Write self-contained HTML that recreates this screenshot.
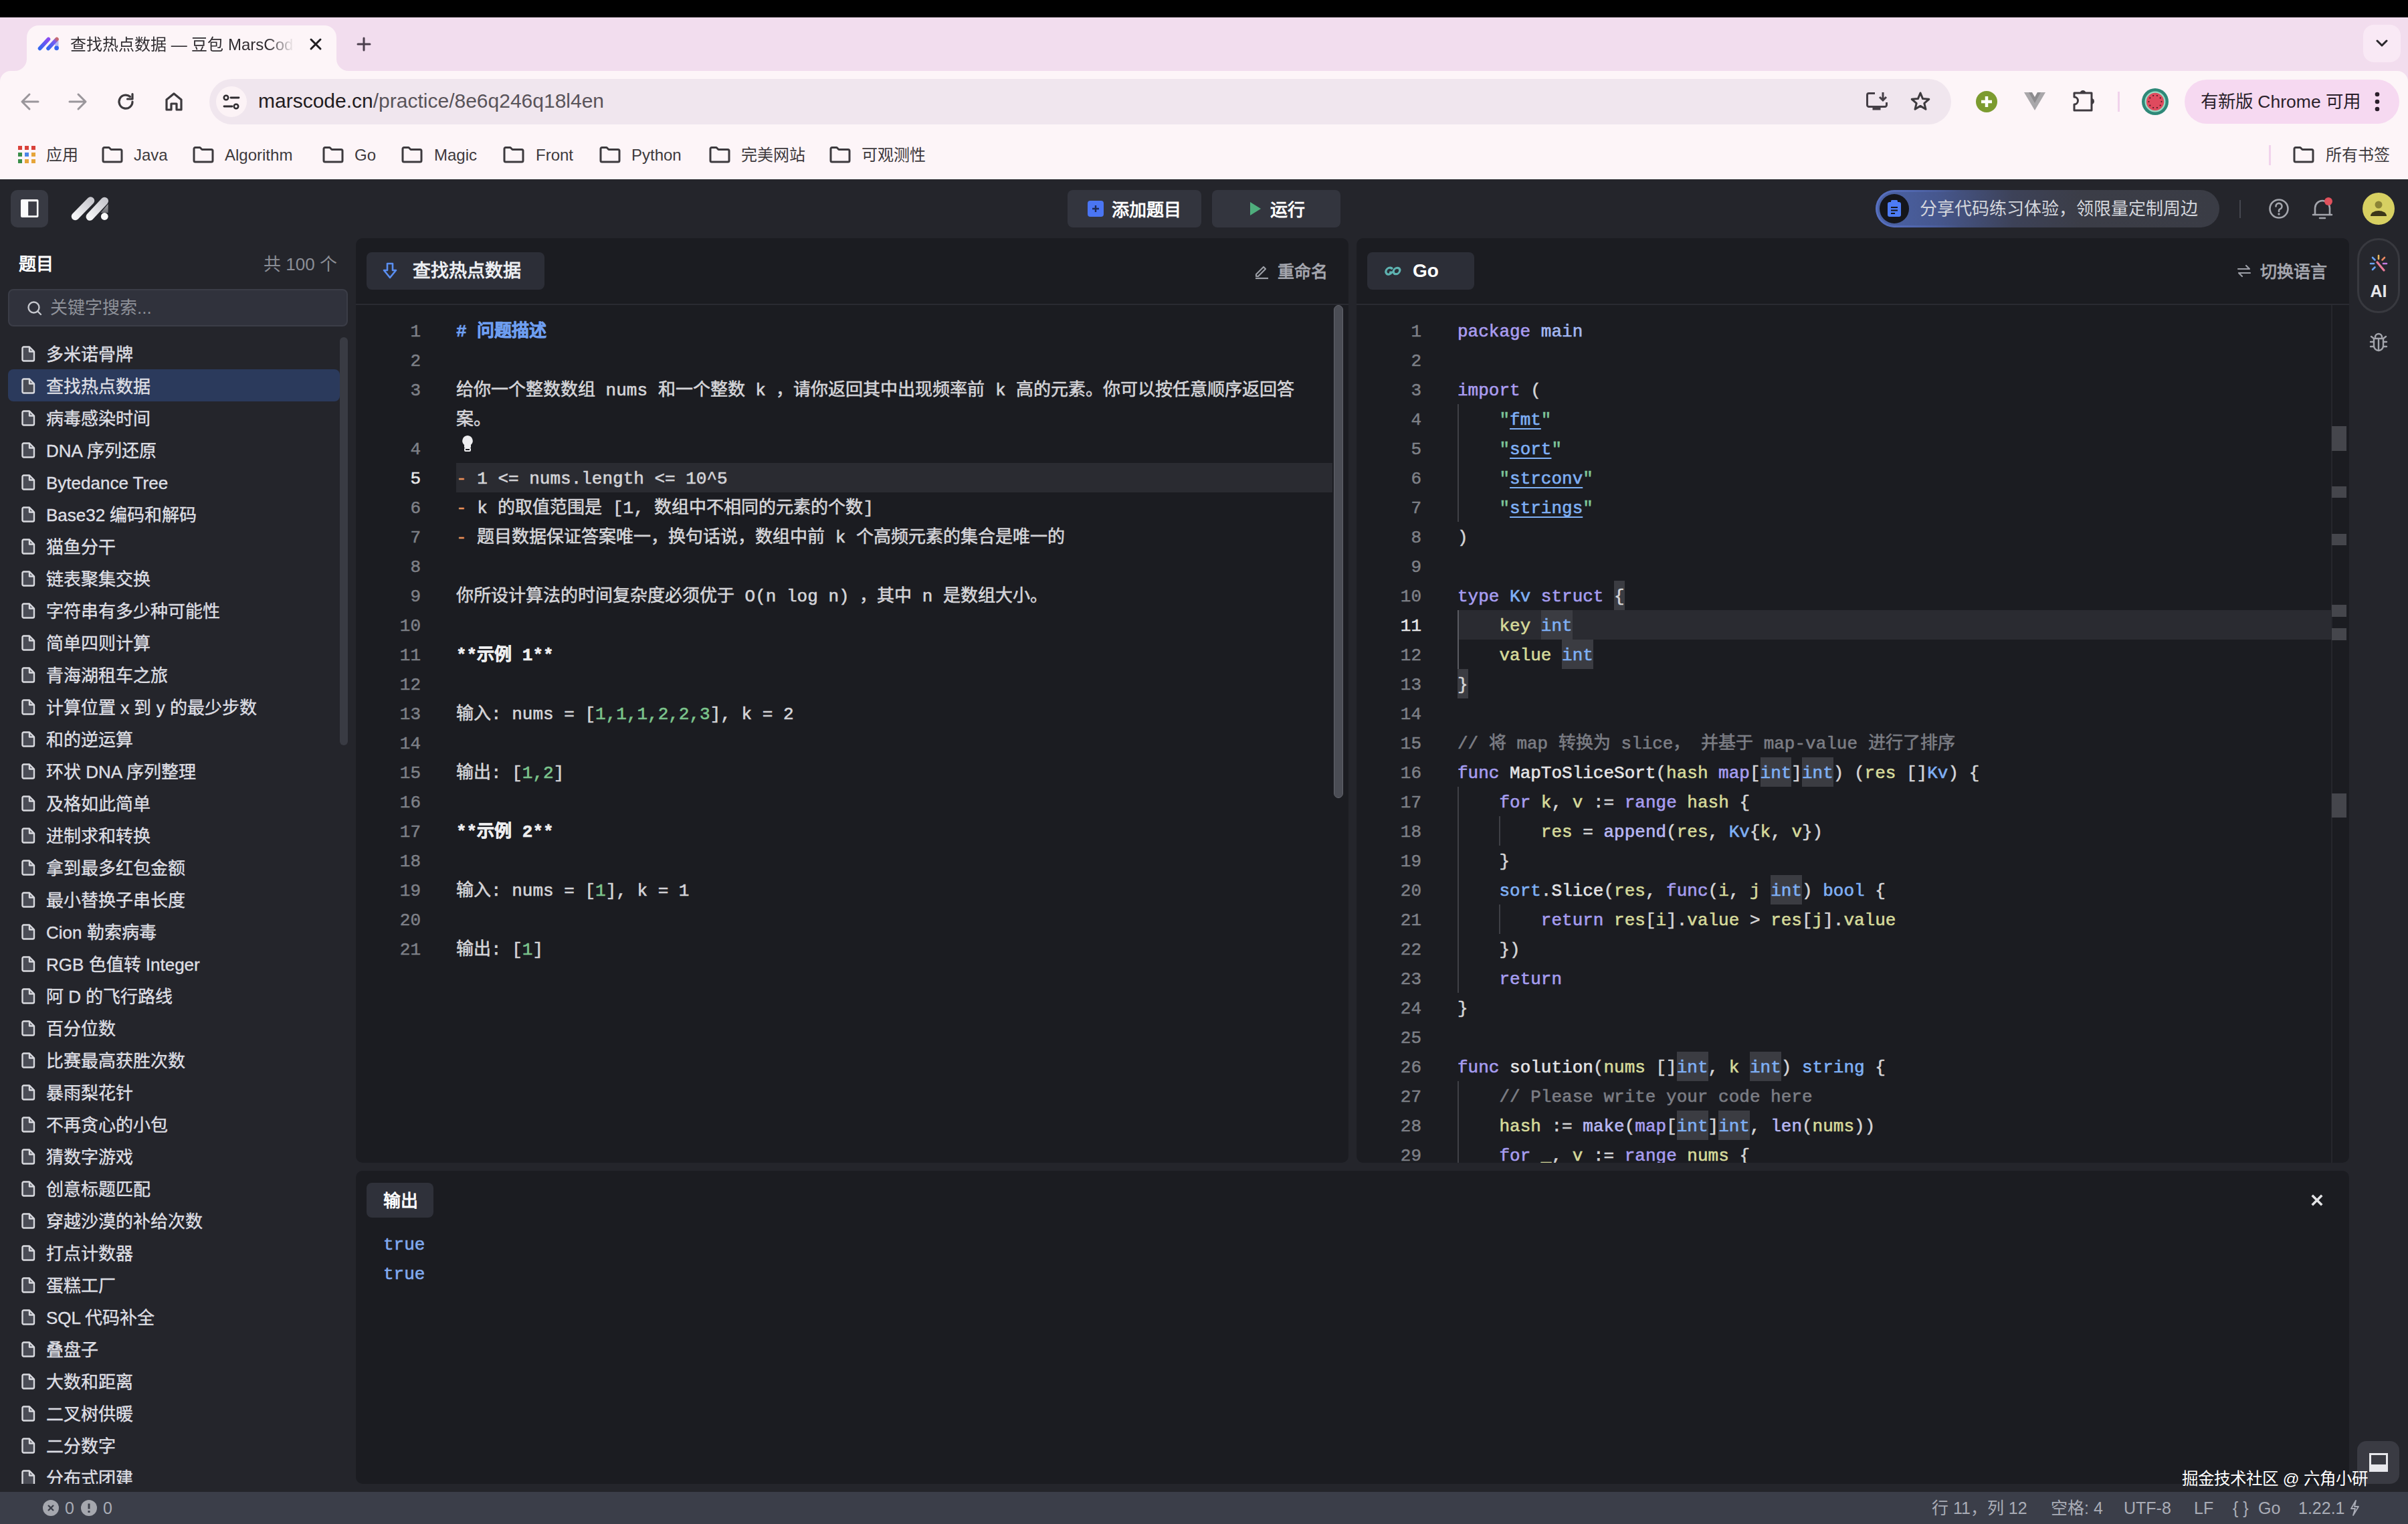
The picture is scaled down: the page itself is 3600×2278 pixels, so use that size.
<!DOCTYPE html>
<html lang="zh-CN">
<head>
<meta charset="utf-8">
<style>
*{margin:0;padding:0;box-sizing:border-box}
html,body{width:3600px;height:2278px;overflow:hidden;background:#24252b;font-family:"Liberation Sans",sans-serif}
.a{position:absolute}
.t{position:absolute;white-space:nowrap}
svg{position:absolute;overflow:visible}
/* chrome */
#blk{left:0;top:0;width:3600px;height:26px;background:#000}
#strip{left:0;top:26px;width:3600px;height:242px;background:#f2ddee}
#tool{left:0;top:106px;width:3600px;height:162px;background:#fdf5f8;border-radius:16px 16px 0 0}
#tab{left:40px;top:38px;width:463px;height:80px;background:#fdf5f8;border-radius:18px 18px 0 0}
#omni{left:313px;top:118px;width:2604px;height:68px;background:#f0e6ee;border-radius:34px}
.bm{font-size:24px;color:#3d3a3d;top:217px;line-height:30px}
/* app */
#app{left:0;top:268px;width:3600px;height:1962px;background:#24252b}
.btn{background:#33353e;border-radius:8px}
.panel{background:#1b1c21;border-radius:10px}
.ln{-webkit-text-stroke:0.5px currentColor;font-family:"Liberation Mono",monospace;font-size:26px;color:#7e8087;text-align:right;width:80px;line-height:44px;height:44px}
.code{font-family:"Liberation Mono",monospace;font-size:26px;line-height:44px;color:#d4d4d8;white-space:pre;-webkit-text-stroke:0.6px currentColor}
.li{left:0;width:532px;height:48px}
.li .ic{position:absolute;left:31px;top:13px}
.li .tx{position:absolute;left:69px;top:2px;-webkit-text-stroke:0.4px currentColor;line-height:48px;font-size:26px;color:#dddee3;white-space:nowrap}
#status{left:0;top:2230px;width:3600px;height:48px;background:#3b3e49}
.st{font-size:25px;color:#a9acb6;line-height:48px;top:2230px}

.k{color:#a69df0}.kp{color:#aa9cf0}.ty{color:#7fb0f5}.v{color:#d5d99a}.s{color:#7ec699}.bi{color:#b7b7f3}.fn{color:#e4e4e6}.cm{color:#7b7d84}.p{color:#d4d4d6}
.hl{background:#3b3c42;display:inline-block;vertical-align:top;height:44px;padding-top:2px;position:relative;top:-2px}.u{color:#7fb0f5;text-decoration:underline;text-decoration-thickness:2px;text-underline-offset:5px}
.gr{color:#7cc48c}.og{color:#e5915a}.md{color:#6e9ef0;font-weight:bold}.b{font-weight:bold;color:#eeeef0}
</style>
</head>
<body>
<div id="blk" class="a"></div>
<div id="strip" class="a"></div>
<div id="tool" class="a"></div>
<div id="tab" class="a"></div>
<svg style="left:22px;top:88px" width="18" height="18" viewBox="0 0 18 18"><path d="M0 18A18 18 0 0 0 18 0V18Z" fill="#fdf5f8"/></svg>
<svg style="left:503px;top:88px" width="18" height="18" viewBox="0 0 18 18"><path d="M18 18A18 18 0 0 1 0 0V18Z" fill="#fdf5f8"/></svg>
<div id="omni" class="a"></div>


<!-- tab contents -->
<svg style="left:56px;top:54px" width="34" height="26" viewBox="0 0 34 26">
<defs><linearGradient id="fg" x1="0" y1="1" x2="1" y2="0"><stop offset="0" stop-color="#3466f0"/><stop offset="1" stop-color="#8a4cf2"/></linearGradient>
<linearGradient id="fg2" x1="0" y1="1" x2="1" y2="0"><stop offset="0" stop-color="#3466f0"/><stop offset="0.75" stop-color="#7a5cf0"/><stop offset="1" stop-color="#c86a70"/></linearGradient></defs>
<path d="M25 7L31.5 4.5V18H27Z" fill="#b4bdf3"/>
<line x1="3.5" y1="18.5" x2="16.5" y2="4.5" stroke="url(#fg)" stroke-width="5.6" stroke-linecap="round"/>
<line x1="16" y1="18.5" x2="29" y2="4.5" stroke="url(#fg2)" stroke-width="5.6" stroke-linecap="round"/>
<circle cx="28.6" cy="17.8" r="3.4" fill="#3466f0"/>
</svg>
<div class="t" style="left:105px;top:49px;font-size:24px;line-height:36px;color:#2f2c30;width:335px;overflow:hidden;-webkit-mask-image:linear-gradient(90deg,#000 88%,transparent)">查找热点数据 — 豆包 MarsCode</div>
<svg style="left:463px;top:57px" width="18" height="18" viewBox="0 0 18 18"><path d="M2 2L16 16M16 2L2 16" stroke="#1f1d20" stroke-width="3" stroke-linecap="round"/></svg>
<svg style="left:534px;top:56px" width="20" height="20" viewBox="0 0 20 20"><path d="M10 1V19M1 10H19" stroke="#4b3f4d" stroke-width="3" stroke-linecap="round"/></svg>
<div class="a" style="left:3533px;top:37px;width:56px;height:56px;border-radius:16px;background:#f9e9f5"></div>
<svg style="left:3552px;top:59px" width="18" height="11" viewBox="0 0 18 11"><path d="M2 2L9 9L16 2" fill="none" stroke="#2a272b" stroke-width="3" stroke-linecap="round" stroke-linejoin="round"/></svg>

<!-- toolbar -->
<svg style="left:30px;top:138px" width="30" height="28" viewBox="0 0 30 28"><path d="M27 14H4M14 3L3 14L14 25" fill="none" stroke="#9a969b" stroke-width="3" stroke-linecap="round" stroke-linejoin="round"/></svg>
<svg style="left:101px;top:138px" width="30" height="28" viewBox="0 0 30 28"><path d="M3 14H26M16 3L27 14L16 25" fill="none" stroke="#9a969b" stroke-width="3" stroke-linecap="round" stroke-linejoin="round"/></svg>
<svg style="left:174px;top:138px" width="28" height="28" viewBox="0 0 28 28"><path d="M24 14A10 10 0 1 1 20.5 6.5" fill="none" stroke="#3d3a3e" stroke-width="3.2" stroke-linecap="round"/><path d="M24 2.5V10H16.5" fill="none" stroke="#3d3a3e" stroke-width="3.2" stroke-linecap="round" stroke-linejoin="round"/></svg>
<svg style="left:246px;top:137px" width="28" height="30" viewBox="0 0 28 30"><path d="M3 27V12L14 3L25 12V27H18V18H10V27Z" fill="none" stroke="#3d3a3e" stroke-width="3.2" stroke-linejoin="round"/></svg>
<div class="a" style="left:323px;top:129px;width:46px;height:46px;border-radius:23px;background:#fcf3f6"></div>
<svg style="left:333px;top:141px" width="26" height="24" viewBox="0 0 26 24"><circle cx="5" cy="5" r="3.2" fill="none" stroke="#2f2c30" stroke-width="2.6"/><path d="M12 5H24" stroke="#2f2c30" stroke-width="2.8" stroke-linecap="round"/><circle cx="20" cy="18" r="3.2" fill="none" stroke="#2f2c30" stroke-width="2.6"/><path d="M2 18H14" stroke="#2f2c30" stroke-width="2.8" stroke-linecap="round"/></svg>
<div class="t" style="left:386px;top:133px;font-size:30px;line-height:36px;color:#1f1c20">marscode.cn<span style="color:#59545a">/practice/8e6q246q18l4en</span></div>
<svg style="left:2789px;top:136px" width="34" height="32" viewBox="0 0 34 32"><path d="M14 3.5H5A2.5 2.5 0 0 0 2.5 6V21A2.5 2.5 0 0 0 5 23.5H29A2.5 2.5 0 0 0 31.5 21V17" fill="none" stroke="#453f46" stroke-width="3"/><path d="M26 2V13.5M21 9L26 14L31 9" fill="none" stroke="#453f46" stroke-width="3"/><rect x="10.5" y="23" width="12" height="5.5" fill="#453f46"/></svg>
<svg style="left:2855px;top:136px" width="32" height="32" viewBox="0 0 32 32"><path d="M16 3L19.6 11.6L28.8 12.3L21.8 18.3L24 27.3L16 22.4L8 27.3L10.2 18.3L3.2 12.3L12.4 11.6Z" fill="none" stroke="#3d3a3e" stroke-width="3" stroke-linejoin="round"/></svg>
<svg style="left:2954px;top:136px" width="32" height="32" viewBox="0 0 32 32"><circle cx="16" cy="16" r="16" fill="#7c9b30"/><path d="M16 8V24M8 16H24" stroke="#fff" stroke-width="4.5"/></svg>
<svg style="left:3026px;top:137px" width="32" height="28" viewBox="0 0 32 28"><path d="M0 1H8L16 15L24 1H32L16 28Z" fill="#a9a7aa"/><path d="M7 1H12L16 8L20 1H25L16 17Z" fill="#8d8b8e"/></svg>
<svg style="left:3097px;top:131px" width="36" height="36" viewBox="0 0 36 36"><path d="M4 8H30V34H4V25A5.5 5.5 0 0 0 4 14Z" fill="none" stroke="#3f3a40" stroke-width="3" stroke-linejoin="round"/><path d="M12.5 8.5A4.5 4.5 0 0 1 21.5 8.5Z" fill="#3f3a40"/><path d="M29.5 16A4.5 4.5 0 0 1 29.5 25Z" fill="#3f3a40"/></svg>
<div class="a" style="left:3166px;top:137px;width:3px;height:30px;background:#f1d3ec"></div>
<svg style="left:3202px;top:132px" width="40" height="40" viewBox="0 0 40 40"><circle cx="20" cy="20" r="20" fill="#2e8878"/><circle cx="20" cy="20" r="15.5" fill="#9ad9c4"/><circle cx="20" cy="20" r="13.2" fill="#df4a5e"/><g fill="#4a1820"><circle cx="29.5" cy="20.0" r="1.1"/><circle cx="27.7" cy="25.6" r="1.1"/><circle cx="22.9" cy="29.0" r="1.1"/><circle cx="17.1" cy="29.0" r="1.1"/><circle cx="12.3" cy="25.6" r="1.1"/><circle cx="10.5" cy="20.0" r="1.1"/><circle cx="12.3" cy="14.4" r="1.1"/><circle cx="17.1" cy="11.0" r="1.1"/><circle cx="22.9" cy="11.0" r="1.1"/><circle cx="27.7" cy="14.4" r="1.1"/></g></svg>
<div class="a" style="left:3266px;top:119px;width:321px;height:66px;border-radius:33px;background:#f6d9f1"></div>
<div class="t" style="left:3290px;top:134px;font-size:26.5px;line-height:36px;color:#2a1f2b">有新版 Chrome 可用</div>
<svg style="left:3550px;top:137px" width="8" height="30" viewBox="0 0 8 30"><circle cx="4" cy="4" r="3.3" fill="#2a1f2b"/><circle cx="4" cy="15" r="3.3" fill="#2a1f2b"/><circle cx="4" cy="26" r="3.3" fill="#2a1f2b"/></svg>

<!-- bookmarks -->
<svg style="left:27px;top:218px" width="26" height="26" viewBox="0 0 26 26">
<rect x="0" y="0" width="6" height="6" fill="#d9413a"/><rect x="10" y="0" width="6" height="6" fill="#d9413a"/><rect x="20" y="0" width="6" height="6" fill="#d9413a"/>
<rect x="0" y="10" width="6" height="6" fill="#3a8f4a"/><rect x="10" y="10" width="6" height="6" fill="#4a86e8"/><rect x="20" y="10" width="6" height="6" fill="#e6a53a"/>
<rect x="0" y="20" width="6" height="6" fill="#3a8f4a"/><rect x="10" y="20" width="6" height="6" fill="#e6a53a"/><rect x="20" y="20" width="6" height="6" fill="#e6a53a"/>
</svg>
<div class="t bm" style="left:69px">应用</div>
<svg style="left:152px;top:219px" width="32" height="25" viewBox="0 0 32 25"><path d="M2 3.5A2 2 0 0 1 4 1.5H11L14 4.5H28A2 2 0 0 1 30 6.5V21A2 2 0 0 1 28 23H4A2 2 0 0 1 2 21Z" fill="none" stroke="#3d3a3e" stroke-width="3" stroke-linejoin="round"/></svg>
<div class="t bm" style="left:200px">Java</div>
<svg style="left:288px;top:219px" width="32" height="25" viewBox="0 0 32 25"><path d="M2 3.5A2 2 0 0 1 4 1.5H11L14 4.5H28A2 2 0 0 1 30 6.5V21A2 2 0 0 1 28 23H4A2 2 0 0 1 2 21Z" fill="none" stroke="#3d3a3e" stroke-width="3" stroke-linejoin="round"/></svg>
<div class="t bm" style="left:336px">Algorithm</div>
<svg style="left:482px;top:219px" width="32" height="25" viewBox="0 0 32 25"><path d="M2 3.5A2 2 0 0 1 4 1.5H11L14 4.5H28A2 2 0 0 1 30 6.5V21A2 2 0 0 1 28 23H4A2 2 0 0 1 2 21Z" fill="none" stroke="#3d3a3e" stroke-width="3" stroke-linejoin="round"/></svg>
<div class="t bm" style="left:530px">Go</div>
<svg style="left:600px;top:219px" width="32" height="25" viewBox="0 0 32 25"><path d="M2 3.5A2 2 0 0 1 4 1.5H11L14 4.5H28A2 2 0 0 1 30 6.5V21A2 2 0 0 1 28 23H4A2 2 0 0 1 2 21Z" fill="none" stroke="#3d3a3e" stroke-width="3" stroke-linejoin="round"/></svg>
<div class="t bm" style="left:649px">Magic</div>
<svg style="left:752px;top:219px" width="32" height="25" viewBox="0 0 32 25"><path d="M2 3.5A2 2 0 0 1 4 1.5H11L14 4.5H28A2 2 0 0 1 30 6.5V21A2 2 0 0 1 28 23H4A2 2 0 0 1 2 21Z" fill="none" stroke="#3d3a3e" stroke-width="3" stroke-linejoin="round"/></svg>
<div class="t bm" style="left:801px">Front</div>
<svg style="left:896px;top:219px" width="32" height="25" viewBox="0 0 32 25"><path d="M2 3.5A2 2 0 0 1 4 1.5H11L14 4.5H28A2 2 0 0 1 30 6.5V21A2 2 0 0 1 28 23H4A2 2 0 0 1 2 21Z" fill="none" stroke="#3d3a3e" stroke-width="3" stroke-linejoin="round"/></svg>
<div class="t bm" style="left:944px">Python</div>
<svg style="left:1060px;top:219px" width="32" height="25" viewBox="0 0 32 25"><path d="M2 3.5A2 2 0 0 1 4 1.5H11L14 4.5H28A2 2 0 0 1 30 6.5V21A2 2 0 0 1 28 23H4A2 2 0 0 1 2 21Z" fill="none" stroke="#3d3a3e" stroke-width="3" stroke-linejoin="round"/></svg>
<div class="t bm" style="left:1108px">完美网站</div>
<svg style="left:1240px;top:219px" width="32" height="25" viewBox="0 0 32 25"><path d="M2 3.5A2 2 0 0 1 4 1.5H11L14 4.5H28A2 2 0 0 1 30 6.5V21A2 2 0 0 1 28 23H4A2 2 0 0 1 2 21Z" fill="none" stroke="#3d3a3e" stroke-width="3" stroke-linejoin="round"/></svg>
<div class="t bm" style="left:1288px">可观测性</div>
<svg style="left:3428px;top:219px" width="32" height="25" viewBox="0 0 32 25"><path d="M2 3.5A2 2 0 0 1 4 1.5H11L14 4.5H28A2 2 0 0 1 30 6.5V21A2 2 0 0 1 28 23H4A2 2 0 0 1 2 21Z" fill="none" stroke="#3d3a3e" stroke-width="3" stroke-linejoin="round"/></svg>
<div class="t bm" style="left:3477px">所有书签</div>
<div class="a" style="left:3392px;top:217px;width:3px;height:30px;background:#f1d3ec"></div>

<div id="app" class="a"></div>

<!-- app header -->
<div class="a btn" style="left:16px;top:284px;width:56px;height:56px;border-radius:10px;background:#383a43"></div>
<svg style="left:31px;top:298px" width="27" height="28" viewBox="0 0 27 28"><rect x="0" y="0" width="26.5" height="27" rx="2" fill="#fbfbfc"/><rect x="11.2" y="3.2" width="12.7" height="21" fill="#3b3c45"/></svg>
<svg style="left:106px;top:293px" width="60" height="40" viewBox="0 0 60 40">
<defs><linearGradient id="lg" x1="0" y1="1" x2="1" y2="0"><stop offset="0" stop-color="#f4f4f6"/><stop offset="1" stop-color="#c9c9cf"/></linearGradient>
<linearGradient id="lg2" x1="0" y1="0" x2="0" y2="1"><stop offset="0" stop-color="#b9b9bd"/><stop offset="1" stop-color="#6a6b70"/></linearGradient></defs>
<path d="M55.6 8V25H44.5L55.6 12Z" fill="url(#lg2)"/>
<line x1="6.5" y1="30.5" x2="29.5" y2="7" stroke="url(#lg)" stroke-width="11.5" stroke-linecap="round"/>
<line x1="28.3" y1="31" x2="50.3" y2="7.5" stroke="url(#lg)" stroke-width="11.5" stroke-linecap="round"/>
<circle cx="50.3" cy="30.5" r="5.4" fill="#fafafa"/>
</svg>
<div class="a btn" style="left:1596px;top:284px;width:200px;height:56px"></div>
<svg style="left:1626px;top:300px" width="24" height="24" viewBox="0 0 24 24"><rect width="24" height="24" rx="4" fill="#4a75f3"/><path d="M12 7V17M7 12H17" stroke="#1d2a55" stroke-width="2.4"/></svg>
<div class="t" style="left:1662px;top:296px;font-size:26px;line-height:36px;color:#fff;font-weight:bold">添加题目</div>
<div class="a btn" style="left:1812px;top:284px;width:192px;height:56px"></div>
<svg style="left:1868px;top:301px" width="18" height="22" viewBox="0 0 18 22"><path d="M1 1L17 11L1 21Z" fill="#4fae7d"/></svg>
<div class="t" style="left:1899px;top:296px;font-size:26px;line-height:36px;color:#fff;font-weight:bold">运行</div>

<div class="a" style="left:2804px;top:284px;width:514px;height:56px;border-radius:28px;background:linear-gradient(90deg,#4b63a8 0%,#46578e 18%,#3d4258 40%,#3b3d47 60%,#3a3c45 100%)"></div><div class="a" style="left:2804px;top:284px;width:514px;height:56px;border-radius:28px;border:3px solid #5870c0;-webkit-mask-image:linear-gradient(90deg,#000 0%,transparent 25%)"></div>
<div class="a" style="left:2810px;top:290px;width:44px;height:44px;border-radius:22px;background:#15161b"></div>
<svg style="left:2821px;top:299px" width="22" height="26" viewBox="0 0 22 26"><rect x="1" y="3" width="20" height="22" rx="3" fill="#4d7cf5"/><rect x="6" y="0" width="10" height="5" rx="1.5" fill="#4d7cf5"/><path d="M6 11H16M6 15.5H16M6 20H12" stroke="#15161b" stroke-width="2"/></svg>
<div class="t" style="left:2870px;top:294px;font-size:26px;line-height:36px;color:#d4d6dc;font-weight:500">分享代码练习体验，领限量定制周边</div>
<div class="a" style="left:3348px;top:299px;width:2px;height:27px;background:#45474f"></div>
<svg style="left:3392px;top:297px" width="30" height="30" viewBox="0 0 30 30"><circle cx="15" cy="15" r="13.5" fill="none" stroke="#a3a5ac" stroke-width="2.6"/><path d="M10.5 11.5A4.5 4.5 0 1 1 16.5 15.6C15.5 16 15 16.8 15 18V19" fill="none" stroke="#a3a5ac" stroke-width="2.6" stroke-linecap="round"/><circle cx="15" cy="23" r="1.7" fill="#a3a5ac"/></svg>
<svg style="left:3457px;top:296px" width="30" height="34" viewBox="0 0 30 34"><path d="M4 25V15A11 11 0 0 1 26 15V25M1 25H29M11 30H19" fill="none" stroke="#a3a5ac" stroke-width="2.6" stroke-linecap="round"/></svg>
<div class="a" style="left:3475px;top:295px;width:12px;height:12px;border-radius:6px;background:#e0515c"></div>
<div class="a" style="left:3532px;top:288px;width:48px;height:48px;border-radius:24px;background:#d7d062"></div>
<svg style="left:3532px;top:288px" width="48" height="48" viewBox="0 0 48 48"><circle cx="24" cy="18" r="5.5" fill="#8b8436"/><path d="M12 35A12 8 0 0 1 36 35Z" fill="#3b3719"/></svg>

<!-- sidebar -->
<div class="t" style="left:28px;top:377px;font-size:26px;line-height:36px;color:#fff;font-weight:bold">题目</div>
<div class="t" style="left:394px;top:377px;font-size:26px;line-height:36px;color:#8b8e96">共 100 个</div>
<div class="a" style="left:12px;top:432px;width:508px;height:56px;border-radius:8px;background:#30323c;border:2px solid #3b3d47"></div>
<svg style="left:40px;top:449px" width="24" height="24" viewBox="0 0 24 24"><circle cx="10.5" cy="10.5" r="8" fill="none" stroke="#c5c7cd" stroke-width="2.4"/><path d="M16.5 16.5L21 21" stroke="#c5c7cd" stroke-width="2.4" stroke-linecap="round"/></svg>
<div class="t" style="left:75px;top:442px;font-size:26px;line-height:36px;color:#8e9199">关键字搜索...</div>
<div class="a" style="left:12px;top:552px;width:496px;height:48px;border-radius:8px;background:#2b3a5c"></div>
<div class="a" style="left:508px;top:504px;width:12px;height:610px;border-radius:6px;background:#393b43"></div>
<div class="a" style="left:0;top:504px;width:508px;height:1714px;overflow:hidden">
<div class="a li" style="top:0px"><svg class="ic" width="22" height="24" viewBox="0 0 22 24"><path d="M2.5 3.5A2 2 0 0 1 4.5 1.5H13L20 8.5V20.5A2 2 0 0 1 18 22.5H4.5A2 2 0 0 1 2.5 20.5Z" fill="#4a4c55" stroke="#d9dadf" stroke-width="2.4" stroke-linejoin="round"/><path d="M13 1.5V8.5H20" fill="none" stroke="#d9dadf" stroke-width="2.4" stroke-linejoin="round"/></svg><div class="tx">多米诺骨牌</div></div>
<div class="a li" style="top:48px"><svg class="ic" width="22" height="24" viewBox="0 0 22 24"><path d="M2.5 3.5A2 2 0 0 1 4.5 1.5H13L20 8.5V20.5A2 2 0 0 1 18 22.5H4.5A2 2 0 0 1 2.5 20.5Z" fill="#4a4c55" stroke="#d9dadf" stroke-width="2.4" stroke-linejoin="round"/><path d="M13 1.5V8.5H20" fill="none" stroke="#d9dadf" stroke-width="2.4" stroke-linejoin="round"/></svg><div class="tx">查找热点数据</div></div>
<div class="a li" style="top:96px"><svg class="ic" width="22" height="24" viewBox="0 0 22 24"><path d="M2.5 3.5A2 2 0 0 1 4.5 1.5H13L20 8.5V20.5A2 2 0 0 1 18 22.5H4.5A2 2 0 0 1 2.5 20.5Z" fill="#4a4c55" stroke="#d9dadf" stroke-width="2.4" stroke-linejoin="round"/><path d="M13 1.5V8.5H20" fill="none" stroke="#d9dadf" stroke-width="2.4" stroke-linejoin="round"/></svg><div class="tx">病毒感染时间</div></div>
<div class="a li" style="top:144px"><svg class="ic" width="22" height="24" viewBox="0 0 22 24"><path d="M2.5 3.5A2 2 0 0 1 4.5 1.5H13L20 8.5V20.5A2 2 0 0 1 18 22.5H4.5A2 2 0 0 1 2.5 20.5Z" fill="#4a4c55" stroke="#d9dadf" stroke-width="2.4" stroke-linejoin="round"/><path d="M13 1.5V8.5H20" fill="none" stroke="#d9dadf" stroke-width="2.4" stroke-linejoin="round"/></svg><div class="tx">DNA 序列还原</div></div>
<div class="a li" style="top:192px"><svg class="ic" width="22" height="24" viewBox="0 0 22 24"><path d="M2.5 3.5A2 2 0 0 1 4.5 1.5H13L20 8.5V20.5A2 2 0 0 1 18 22.5H4.5A2 2 0 0 1 2.5 20.5Z" fill="#4a4c55" stroke="#d9dadf" stroke-width="2.4" stroke-linejoin="round"/><path d="M13 1.5V8.5H20" fill="none" stroke="#d9dadf" stroke-width="2.4" stroke-linejoin="round"/></svg><div class="tx">Bytedance Tree</div></div>
<div class="a li" style="top:240px"><svg class="ic" width="22" height="24" viewBox="0 0 22 24"><path d="M2.5 3.5A2 2 0 0 1 4.5 1.5H13L20 8.5V20.5A2 2 0 0 1 18 22.5H4.5A2 2 0 0 1 2.5 20.5Z" fill="#4a4c55" stroke="#d9dadf" stroke-width="2.4" stroke-linejoin="round"/><path d="M13 1.5V8.5H20" fill="none" stroke="#d9dadf" stroke-width="2.4" stroke-linejoin="round"/></svg><div class="tx">Base32 编码和解码</div></div>
<div class="a li" style="top:288px"><svg class="ic" width="22" height="24" viewBox="0 0 22 24"><path d="M2.5 3.5A2 2 0 0 1 4.5 1.5H13L20 8.5V20.5A2 2 0 0 1 18 22.5H4.5A2 2 0 0 1 2.5 20.5Z" fill="#4a4c55" stroke="#d9dadf" stroke-width="2.4" stroke-linejoin="round"/><path d="M13 1.5V8.5H20" fill="none" stroke="#d9dadf" stroke-width="2.4" stroke-linejoin="round"/></svg><div class="tx">猫鱼分干</div></div>
<div class="a li" style="top:336px"><svg class="ic" width="22" height="24" viewBox="0 0 22 24"><path d="M2.5 3.5A2 2 0 0 1 4.5 1.5H13L20 8.5V20.5A2 2 0 0 1 18 22.5H4.5A2 2 0 0 1 2.5 20.5Z" fill="#4a4c55" stroke="#d9dadf" stroke-width="2.4" stroke-linejoin="round"/><path d="M13 1.5V8.5H20" fill="none" stroke="#d9dadf" stroke-width="2.4" stroke-linejoin="round"/></svg><div class="tx">链表聚集交换</div></div>
<div class="a li" style="top:384px"><svg class="ic" width="22" height="24" viewBox="0 0 22 24"><path d="M2.5 3.5A2 2 0 0 1 4.5 1.5H13L20 8.5V20.5A2 2 0 0 1 18 22.5H4.5A2 2 0 0 1 2.5 20.5Z" fill="#4a4c55" stroke="#d9dadf" stroke-width="2.4" stroke-linejoin="round"/><path d="M13 1.5V8.5H20" fill="none" stroke="#d9dadf" stroke-width="2.4" stroke-linejoin="round"/></svg><div class="tx">字符串有多少种可能性</div></div>
<div class="a li" style="top:432px"><svg class="ic" width="22" height="24" viewBox="0 0 22 24"><path d="M2.5 3.5A2 2 0 0 1 4.5 1.5H13L20 8.5V20.5A2 2 0 0 1 18 22.5H4.5A2 2 0 0 1 2.5 20.5Z" fill="#4a4c55" stroke="#d9dadf" stroke-width="2.4" stroke-linejoin="round"/><path d="M13 1.5V8.5H20" fill="none" stroke="#d9dadf" stroke-width="2.4" stroke-linejoin="round"/></svg><div class="tx">简单四则计算</div></div>
<div class="a li" style="top:480px"><svg class="ic" width="22" height="24" viewBox="0 0 22 24"><path d="M2.5 3.5A2 2 0 0 1 4.5 1.5H13L20 8.5V20.5A2 2 0 0 1 18 22.5H4.5A2 2 0 0 1 2.5 20.5Z" fill="#4a4c55" stroke="#d9dadf" stroke-width="2.4" stroke-linejoin="round"/><path d="M13 1.5V8.5H20" fill="none" stroke="#d9dadf" stroke-width="2.4" stroke-linejoin="round"/></svg><div class="tx">青海湖租车之旅</div></div>
<div class="a li" style="top:528px"><svg class="ic" width="22" height="24" viewBox="0 0 22 24"><path d="M2.5 3.5A2 2 0 0 1 4.5 1.5H13L20 8.5V20.5A2 2 0 0 1 18 22.5H4.5A2 2 0 0 1 2.5 20.5Z" fill="#4a4c55" stroke="#d9dadf" stroke-width="2.4" stroke-linejoin="round"/><path d="M13 1.5V8.5H20" fill="none" stroke="#d9dadf" stroke-width="2.4" stroke-linejoin="round"/></svg><div class="tx">计算位置 x 到 y 的最少步数</div></div>
<div class="a li" style="top:576px"><svg class="ic" width="22" height="24" viewBox="0 0 22 24"><path d="M2.5 3.5A2 2 0 0 1 4.5 1.5H13L20 8.5V20.5A2 2 0 0 1 18 22.5H4.5A2 2 0 0 1 2.5 20.5Z" fill="#4a4c55" stroke="#d9dadf" stroke-width="2.4" stroke-linejoin="round"/><path d="M13 1.5V8.5H20" fill="none" stroke="#d9dadf" stroke-width="2.4" stroke-linejoin="round"/></svg><div class="tx">和的逆运算</div></div>
<div class="a li" style="top:624px"><svg class="ic" width="22" height="24" viewBox="0 0 22 24"><path d="M2.5 3.5A2 2 0 0 1 4.5 1.5H13L20 8.5V20.5A2 2 0 0 1 18 22.5H4.5A2 2 0 0 1 2.5 20.5Z" fill="#4a4c55" stroke="#d9dadf" stroke-width="2.4" stroke-linejoin="round"/><path d="M13 1.5V8.5H20" fill="none" stroke="#d9dadf" stroke-width="2.4" stroke-linejoin="round"/></svg><div class="tx">环状 DNA 序列整理</div></div>
<div class="a li" style="top:672px"><svg class="ic" width="22" height="24" viewBox="0 0 22 24"><path d="M2.5 3.5A2 2 0 0 1 4.5 1.5H13L20 8.5V20.5A2 2 0 0 1 18 22.5H4.5A2 2 0 0 1 2.5 20.5Z" fill="#4a4c55" stroke="#d9dadf" stroke-width="2.4" stroke-linejoin="round"/><path d="M13 1.5V8.5H20" fill="none" stroke="#d9dadf" stroke-width="2.4" stroke-linejoin="round"/></svg><div class="tx">及格如此简单</div></div>
<div class="a li" style="top:720px"><svg class="ic" width="22" height="24" viewBox="0 0 22 24"><path d="M2.5 3.5A2 2 0 0 1 4.5 1.5H13L20 8.5V20.5A2 2 0 0 1 18 22.5H4.5A2 2 0 0 1 2.5 20.5Z" fill="#4a4c55" stroke="#d9dadf" stroke-width="2.4" stroke-linejoin="round"/><path d="M13 1.5V8.5H20" fill="none" stroke="#d9dadf" stroke-width="2.4" stroke-linejoin="round"/></svg><div class="tx">进制求和转换</div></div>
<div class="a li" style="top:768px"><svg class="ic" width="22" height="24" viewBox="0 0 22 24"><path d="M2.5 3.5A2 2 0 0 1 4.5 1.5H13L20 8.5V20.5A2 2 0 0 1 18 22.5H4.5A2 2 0 0 1 2.5 20.5Z" fill="#4a4c55" stroke="#d9dadf" stroke-width="2.4" stroke-linejoin="round"/><path d="M13 1.5V8.5H20" fill="none" stroke="#d9dadf" stroke-width="2.4" stroke-linejoin="round"/></svg><div class="tx">拿到最多红包金额</div></div>
<div class="a li" style="top:816px"><svg class="ic" width="22" height="24" viewBox="0 0 22 24"><path d="M2.5 3.5A2 2 0 0 1 4.5 1.5H13L20 8.5V20.5A2 2 0 0 1 18 22.5H4.5A2 2 0 0 1 2.5 20.5Z" fill="#4a4c55" stroke="#d9dadf" stroke-width="2.4" stroke-linejoin="round"/><path d="M13 1.5V8.5H20" fill="none" stroke="#d9dadf" stroke-width="2.4" stroke-linejoin="round"/></svg><div class="tx">最小替换子串长度</div></div>
<div class="a li" style="top:864px"><svg class="ic" width="22" height="24" viewBox="0 0 22 24"><path d="M2.5 3.5A2 2 0 0 1 4.5 1.5H13L20 8.5V20.5A2 2 0 0 1 18 22.5H4.5A2 2 0 0 1 2.5 20.5Z" fill="#4a4c55" stroke="#d9dadf" stroke-width="2.4" stroke-linejoin="round"/><path d="M13 1.5V8.5H20" fill="none" stroke="#d9dadf" stroke-width="2.4" stroke-linejoin="round"/></svg><div class="tx">Cion 勒索病毒</div></div>
<div class="a li" style="top:912px"><svg class="ic" width="22" height="24" viewBox="0 0 22 24"><path d="M2.5 3.5A2 2 0 0 1 4.5 1.5H13L20 8.5V20.5A2 2 0 0 1 18 22.5H4.5A2 2 0 0 1 2.5 20.5Z" fill="#4a4c55" stroke="#d9dadf" stroke-width="2.4" stroke-linejoin="round"/><path d="M13 1.5V8.5H20" fill="none" stroke="#d9dadf" stroke-width="2.4" stroke-linejoin="round"/></svg><div class="tx">RGB 色值转 Integer</div></div>
<div class="a li" style="top:960px"><svg class="ic" width="22" height="24" viewBox="0 0 22 24"><path d="M2.5 3.5A2 2 0 0 1 4.5 1.5H13L20 8.5V20.5A2 2 0 0 1 18 22.5H4.5A2 2 0 0 1 2.5 20.5Z" fill="#4a4c55" stroke="#d9dadf" stroke-width="2.4" stroke-linejoin="round"/><path d="M13 1.5V8.5H20" fill="none" stroke="#d9dadf" stroke-width="2.4" stroke-linejoin="round"/></svg><div class="tx">阿 D 的飞行路线</div></div>
<div class="a li" style="top:1008px"><svg class="ic" width="22" height="24" viewBox="0 0 22 24"><path d="M2.5 3.5A2 2 0 0 1 4.5 1.5H13L20 8.5V20.5A2 2 0 0 1 18 22.5H4.5A2 2 0 0 1 2.5 20.5Z" fill="#4a4c55" stroke="#d9dadf" stroke-width="2.4" stroke-linejoin="round"/><path d="M13 1.5V8.5H20" fill="none" stroke="#d9dadf" stroke-width="2.4" stroke-linejoin="round"/></svg><div class="tx">百分位数</div></div>
<div class="a li" style="top:1056px"><svg class="ic" width="22" height="24" viewBox="0 0 22 24"><path d="M2.5 3.5A2 2 0 0 1 4.5 1.5H13L20 8.5V20.5A2 2 0 0 1 18 22.5H4.5A2 2 0 0 1 2.5 20.5Z" fill="#4a4c55" stroke="#d9dadf" stroke-width="2.4" stroke-linejoin="round"/><path d="M13 1.5V8.5H20" fill="none" stroke="#d9dadf" stroke-width="2.4" stroke-linejoin="round"/></svg><div class="tx">比赛最高获胜次数</div></div>
<div class="a li" style="top:1104px"><svg class="ic" width="22" height="24" viewBox="0 0 22 24"><path d="M2.5 3.5A2 2 0 0 1 4.5 1.5H13L20 8.5V20.5A2 2 0 0 1 18 22.5H4.5A2 2 0 0 1 2.5 20.5Z" fill="#4a4c55" stroke="#d9dadf" stroke-width="2.4" stroke-linejoin="round"/><path d="M13 1.5V8.5H20" fill="none" stroke="#d9dadf" stroke-width="2.4" stroke-linejoin="round"/></svg><div class="tx">暴雨梨花针</div></div>
<div class="a li" style="top:1152px"><svg class="ic" width="22" height="24" viewBox="0 0 22 24"><path d="M2.5 3.5A2 2 0 0 1 4.5 1.5H13L20 8.5V20.5A2 2 0 0 1 18 22.5H4.5A2 2 0 0 1 2.5 20.5Z" fill="#4a4c55" stroke="#d9dadf" stroke-width="2.4" stroke-linejoin="round"/><path d="M13 1.5V8.5H20" fill="none" stroke="#d9dadf" stroke-width="2.4" stroke-linejoin="round"/></svg><div class="tx">不再贪心的小包</div></div>
<div class="a li" style="top:1200px"><svg class="ic" width="22" height="24" viewBox="0 0 22 24"><path d="M2.5 3.5A2 2 0 0 1 4.5 1.5H13L20 8.5V20.5A2 2 0 0 1 18 22.5H4.5A2 2 0 0 1 2.5 20.5Z" fill="#4a4c55" stroke="#d9dadf" stroke-width="2.4" stroke-linejoin="round"/><path d="M13 1.5V8.5H20" fill="none" stroke="#d9dadf" stroke-width="2.4" stroke-linejoin="round"/></svg><div class="tx">猜数字游戏</div></div>
<div class="a li" style="top:1248px"><svg class="ic" width="22" height="24" viewBox="0 0 22 24"><path d="M2.5 3.5A2 2 0 0 1 4.5 1.5H13L20 8.5V20.5A2 2 0 0 1 18 22.5H4.5A2 2 0 0 1 2.5 20.5Z" fill="#4a4c55" stroke="#d9dadf" stroke-width="2.4" stroke-linejoin="round"/><path d="M13 1.5V8.5H20" fill="none" stroke="#d9dadf" stroke-width="2.4" stroke-linejoin="round"/></svg><div class="tx">创意标题匹配</div></div>
<div class="a li" style="top:1296px"><svg class="ic" width="22" height="24" viewBox="0 0 22 24"><path d="M2.5 3.5A2 2 0 0 1 4.5 1.5H13L20 8.5V20.5A2 2 0 0 1 18 22.5H4.5A2 2 0 0 1 2.5 20.5Z" fill="#4a4c55" stroke="#d9dadf" stroke-width="2.4" stroke-linejoin="round"/><path d="M13 1.5V8.5H20" fill="none" stroke="#d9dadf" stroke-width="2.4" stroke-linejoin="round"/></svg><div class="tx">穿越沙漠的补给次数</div></div>
<div class="a li" style="top:1344px"><svg class="ic" width="22" height="24" viewBox="0 0 22 24"><path d="M2.5 3.5A2 2 0 0 1 4.5 1.5H13L20 8.5V20.5A2 2 0 0 1 18 22.5H4.5A2 2 0 0 1 2.5 20.5Z" fill="#4a4c55" stroke="#d9dadf" stroke-width="2.4" stroke-linejoin="round"/><path d="M13 1.5V8.5H20" fill="none" stroke="#d9dadf" stroke-width="2.4" stroke-linejoin="round"/></svg><div class="tx">打点计数器</div></div>
<div class="a li" style="top:1392px"><svg class="ic" width="22" height="24" viewBox="0 0 22 24"><path d="M2.5 3.5A2 2 0 0 1 4.5 1.5H13L20 8.5V20.5A2 2 0 0 1 18 22.5H4.5A2 2 0 0 1 2.5 20.5Z" fill="#4a4c55" stroke="#d9dadf" stroke-width="2.4" stroke-linejoin="round"/><path d="M13 1.5V8.5H20" fill="none" stroke="#d9dadf" stroke-width="2.4" stroke-linejoin="round"/></svg><div class="tx">蛋糕工厂</div></div>
<div class="a li" style="top:1440px"><svg class="ic" width="22" height="24" viewBox="0 0 22 24"><path d="M2.5 3.5A2 2 0 0 1 4.5 1.5H13L20 8.5V20.5A2 2 0 0 1 18 22.5H4.5A2 2 0 0 1 2.5 20.5Z" fill="#4a4c55" stroke="#d9dadf" stroke-width="2.4" stroke-linejoin="round"/><path d="M13 1.5V8.5H20" fill="none" stroke="#d9dadf" stroke-width="2.4" stroke-linejoin="round"/></svg><div class="tx">SQL 代码补全</div></div>
<div class="a li" style="top:1488px"><svg class="ic" width="22" height="24" viewBox="0 0 22 24"><path d="M2.5 3.5A2 2 0 0 1 4.5 1.5H13L20 8.5V20.5A2 2 0 0 1 18 22.5H4.5A2 2 0 0 1 2.5 20.5Z" fill="#4a4c55" stroke="#d9dadf" stroke-width="2.4" stroke-linejoin="round"/><path d="M13 1.5V8.5H20" fill="none" stroke="#d9dadf" stroke-width="2.4" stroke-linejoin="round"/></svg><div class="tx">叠盘子</div></div>
<div class="a li" style="top:1536px"><svg class="ic" width="22" height="24" viewBox="0 0 22 24"><path d="M2.5 3.5A2 2 0 0 1 4.5 1.5H13L20 8.5V20.5A2 2 0 0 1 18 22.5H4.5A2 2 0 0 1 2.5 20.5Z" fill="#4a4c55" stroke="#d9dadf" stroke-width="2.4" stroke-linejoin="round"/><path d="M13 1.5V8.5H20" fill="none" stroke="#d9dadf" stroke-width="2.4" stroke-linejoin="round"/></svg><div class="tx">大数和距离</div></div>
<div class="a li" style="top:1584px"><svg class="ic" width="22" height="24" viewBox="0 0 22 24"><path d="M2.5 3.5A2 2 0 0 1 4.5 1.5H13L20 8.5V20.5A2 2 0 0 1 18 22.5H4.5A2 2 0 0 1 2.5 20.5Z" fill="#4a4c55" stroke="#d9dadf" stroke-width="2.4" stroke-linejoin="round"/><path d="M13 1.5V8.5H20" fill="none" stroke="#d9dadf" stroke-width="2.4" stroke-linejoin="round"/></svg><div class="tx">二叉树供暖</div></div>
<div class="a li" style="top:1632px"><svg class="ic" width="22" height="24" viewBox="0 0 22 24"><path d="M2.5 3.5A2 2 0 0 1 4.5 1.5H13L20 8.5V20.5A2 2 0 0 1 18 22.5H4.5A2 2 0 0 1 2.5 20.5Z" fill="#4a4c55" stroke="#d9dadf" stroke-width="2.4" stroke-linejoin="round"/><path d="M13 1.5V8.5H20" fill="none" stroke="#d9dadf" stroke-width="2.4" stroke-linejoin="round"/></svg><div class="tx">二分数字</div></div>
<div class="a li" style="top:1680px"><svg class="ic" width="22" height="24" viewBox="0 0 22 24"><path d="M2.5 3.5A2 2 0 0 1 4.5 1.5H13L20 8.5V20.5A2 2 0 0 1 18 22.5H4.5A2 2 0 0 1 2.5 20.5Z" fill="#4a4c55" stroke="#d9dadf" stroke-width="2.4" stroke-linejoin="round"/><path d="M13 1.5V8.5H20" fill="none" stroke="#d9dadf" stroke-width="2.4" stroke-linejoin="round"/></svg><div class="tx">分布式团建</div></div>
</div>

<!-- problem panel -->
<div class="a panel" style="left:532px;top:356px;width:1484px;height:1382px"></div>
<div class="a" style="left:532px;top:454px;width:1484px;height:2px;background:#2a2b31"></div>
<div class="a btn" style="left:548px;top:377px;width:266px;height:56px;border-radius:8px;background:#2c2e37"></div>
<svg style="left:572px;top:392px" width="22" height="26" viewBox="0 0 22 26"><path d="M7 2H15V12H20L11 23L2 12H7Z" fill="none" stroke="#5a8ef0" stroke-width="2.6" stroke-linejoin="round"/></svg>
<div class="t" style="left:617px;top:387px;font-size:27px;line-height:36px;color:#eceef2;font-weight:bold">查找热点数据</div>
<svg style="left:1874px;top:393px" width="24" height="24" viewBox="0 0 24 24"><path d="M4 17L15 6L18 9L7 20H4Z" fill="none" stroke="#9c9ea6" stroke-width="2.2" stroke-linejoin="round"/><path d="M3 23H22" stroke="#9c9ea6" stroke-width="2.2"/></svg>
<div class="t" style="left:1910px;top:388px;font-size:25px;line-height:36px;color:#a3a5ad;font-weight:bold">重命名</div>
<div class="a" style="left:682px;top:692px;width:1310px;height:44px;background:#2a2b31"></div>
<div class="a" style="left:1994px;top:456px;width:14px;height:737px;border-radius:7px;background:#4b4d55;border:1.5px solid #63656d"></div>

<!-- code panel -->
<div class="a panel" style="left:2028px;top:356px;width:1484px;height:1382px"></div>
<div class="a" style="left:2028px;top:454px;width:1484px;height:2px;background:#2a2b31"></div>
<div class="a btn" style="left:2044px;top:377px;width:160px;height:56px;border-radius:8px;background:#2c2e37"></div>
<svg style="left:2070px;top:398px" width="25" height="14" viewBox="0 0 25 14"><g fill="none" stroke="#5eb3b1" stroke-width="3.2" transform="skewX(-12) translate(2 0)"><path d="M10.5 4.2A5 5 0 1 0 11 9.2H7"/><circle cx="17.5" cy="7" r="4.7"/></g></svg>
<div class="t" style="left:2112px;top:387px;font-size:28px;line-height:36px;color:#fff;font-weight:bold">Go</div>
<svg style="left:3344px;top:394px" width="22" height="22" viewBox="0 0 22 22"><path d="M2 8H19M14 3L19 8M20 14H3M8 19L3 14" fill="none" stroke="#9c9ea6" stroke-width="2.2" stroke-linecap="round" stroke-linejoin="round"/></svg>
<div class="t" style="left:3379px;top:388px;font-size:25px;line-height:36px;color:#a3a5ad;font-weight:bold">切换语言</div>
<div class="a" style="left:3485px;top:456px;width:2px;height:1282px;background:#26272d"></div>
<div class="a" style="left:2180px;top:912px;width:1305px;height:44px;background:#2a2b31"></div>

<!-- problem text -->
<div class="a ln" style="left:549px;top:474px;color:#7e8087">1</div>
<div class="t code" style="left:682px;top:474px"><span class="md"># 问题描述</span></div>
<div class="a ln" style="left:549px;top:518px;color:#7e8087">2</div>
<div class="a ln" style="left:549px;top:562px;color:#7e8087">3</div>
<div class="t code" style="left:682px;top:562px">给你一个整数数组 nums 和一个整数 k ，请你返回其中出现频率前 k 高的元素。你可以按任意顺序返回答</div>
<div class="t code" style="left:682px;top:606px">案。</div>
<div class="a ln" style="left:549px;top:650px;color:#7e8087">4</div>
<div class="a ln" style="left:549px;top:694px;color:#e8e8ea">5</div>
<div class="t code" style="left:682px;top:694px"><span class="og">-</span> 1 &lt;= nums.length &lt;= 10^5</div>
<div class="a ln" style="left:549px;top:738px;color:#7e8087">6</div>
<div class="t code" style="left:682px;top:738px"><span class="og">-</span> k 的取值范围是 [1, 数组中不相同的元素的个数]</div>
<div class="a ln" style="left:549px;top:782px;color:#7e8087">7</div>
<div class="t code" style="left:682px;top:782px"><span class="og">-</span> 题目数据保证答案唯一，换句话说，数组中前 k 个高频元素的集合是唯一的</div>
<div class="a ln" style="left:549px;top:826px;color:#7e8087">8</div>
<div class="a ln" style="left:549px;top:870px;color:#7e8087">9</div>
<div class="t code" style="left:682px;top:870px">你所设计算法的时间复杂度必须优于 O(n log n) ，其中 n 是数组大小。</div>
<div class="a ln" style="left:549px;top:914px;color:#7e8087">10</div>
<div class="a ln" style="left:549px;top:958px;color:#7e8087">11</div>
<div class="t code" style="left:682px;top:958px"><span class="b">**示例 1**</span></div>
<div class="a ln" style="left:549px;top:1002px;color:#7e8087">12</div>
<div class="a ln" style="left:549px;top:1046px;color:#7e8087">13</div>
<div class="t code" style="left:682px;top:1046px">输入: nums = [<span class="gr">1,1,1,2,2,3</span>], k = 2</div>
<div class="a ln" style="left:549px;top:1090px;color:#7e8087">14</div>
<div class="a ln" style="left:549px;top:1134px;color:#7e8087">15</div>
<div class="t code" style="left:682px;top:1134px">输出: [<span class="gr">1,2</span>]</div>
<div class="a ln" style="left:549px;top:1178px;color:#7e8087">16</div>
<div class="a ln" style="left:549px;top:1222px;color:#7e8087">17</div>
<div class="t code" style="left:682px;top:1222px"><span class="b">**示例 2**</span></div>
<div class="a ln" style="left:549px;top:1266px;color:#7e8087">18</div>
<div class="a ln" style="left:549px;top:1310px;color:#7e8087">19</div>
<div class="t code" style="left:682px;top:1310px">输入: nums = [<span class="gr">1</span>], k = 1</div>
<div class="a ln" style="left:549px;top:1354px;color:#7e8087">20</div>
<div class="a ln" style="left:549px;top:1398px;color:#7e8087">21</div>
<div class="t code" style="left:682px;top:1398px">输出: [<span class="gr">1</span>]</div>
<svg style="left:690px;top:650px" width="18" height="25" viewBox="0 0 18 25"><path d="M9 1A8 8 0 0 0 4 15V19H14V15A8 8 0 0 0 9 1Z" fill="#eeeef0"/><rect x="5" y="20" width="8" height="4" rx="1" fill="none" stroke="#eeeef0" stroke-width="2"/></svg>
<!-- code text -->
<div class="a" style="left:2028px;top:456px;width:1457px;height:1282px;overflow:hidden">
<div class="a" style="left:151px;top:148px;width:2px;height:176px;background:#3f4046"></div>
<div class="a" style="left:151px;top:456px;width:2px;height:88px;background:#5a5b61"></div>
<div class="a" style="left:151px;top:720px;width:2px;height:308px;background:#3f4046"></div>
<div class="a" style="left:213px;top:764px;width:2px;height:44px;background:#3f4046"></div>
<div class="a" style="left:213px;top:896px;width:2px;height:44px;background:#3f4046"></div>
<div class="a" style="left:151px;top:1160px;width:2px;height:132px;background:#3f4046"></div>
<div class="a ln" style="left:17px;top:18px;color:#7e8087">1</div>
<div class="t code" style="left:151px;top:18px"><span class="kp">package</span> <span class="k" style="color:#a4b8f2">main</span></div>
<div class="a ln" style="left:17px;top:62px;color:#7e8087">2</div>
<div class="a ln" style="left:17px;top:106px;color:#7e8087">3</div>
<div class="t code" style="left:151px;top:106px"><span class="kp">import</span> <span class="p">(</span></div>
<div class="a ln" style="left:17px;top:150px;color:#7e8087">4</div>
<div class="t code" style="left:151px;top:150px">    <span class="s">"</span><span class="u">fmt</span><span class="s">"</span></div>
<div class="a ln" style="left:17px;top:194px;color:#7e8087">5</div>
<div class="t code" style="left:151px;top:194px">    <span class="s">"</span><span class="u">sort</span><span class="s">"</span></div>
<div class="a ln" style="left:17px;top:238px;color:#7e8087">6</div>
<div class="t code" style="left:151px;top:238px">    <span class="s">"</span><span class="u">strconv</span><span class="s">"</span></div>
<div class="a ln" style="left:17px;top:282px;color:#7e8087">7</div>
<div class="t code" style="left:151px;top:282px">    <span class="s">"</span><span class="u">strings</span><span class="s">"</span></div>
<div class="a ln" style="left:17px;top:326px;color:#7e8087">8</div>
<div class="t code" style="left:151px;top:326px"><span class="p">)</span></div>
<div class="a ln" style="left:17px;top:370px;color:#7e8087">9</div>
<div class="a ln" style="left:17px;top:414px;color:#7e8087">10</div>
<div class="t code" style="left:151px;top:414px"><span class="k">type</span> <span class="ty">Kv</span> <span class="k">struct</span> <span class="p hl">{</span></div>
<div class="a ln" style="left:17px;top:458px;color:#e8e8ea">11</div>
<div class="t code" style="left:151px;top:458px">    <span class="v">key</span> <span class="ty hl">int</span></div>
<div class="a ln" style="left:17px;top:502px;color:#7e8087">12</div>
<div class="t code" style="left:151px;top:502px">    <span class="v">value</span> <span class="ty hl">int</span></div>
<div class="a ln" style="left:17px;top:546px;color:#7e8087">13</div>
<div class="t code" style="left:151px;top:546px"><span class="p hl">}</span></div>
<div class="a ln" style="left:17px;top:590px;color:#7e8087">14</div>
<div class="a ln" style="left:17px;top:634px;color:#7e8087">15</div>
<div class="t code" style="left:151px;top:634px"><span class="cm">// 将 map 转换为 slice， 并基于 map-value 进行了排序</span></div>
<div class="a ln" style="left:17px;top:678px;color:#7e8087">16</div>
<div class="t code" style="left:151px;top:678px"><span class="k">func</span> <span class="fn">MapToSliceSort</span><span class="p">(</span><span class="v">hash</span> <span class="k">map</span><span class="p">[</span><span class="ty hl">int</span><span class="p">]</span><span class="ty hl">int</span><span class="p">)</span> <span class="p">(</span><span class="v">res</span> <span class="p">[]</span><span class="ty">Kv</span><span class="p">)</span> <span class="p">{</span></div>
<div class="a ln" style="left:17px;top:722px;color:#7e8087">17</div>
<div class="t code" style="left:151px;top:722px">    <span class="k">for</span> <span class="v">k</span><span class="p">,</span> <span class="v">v</span> <span class="p">:=</span> <span class="k">range</span> <span class="v">hash</span> <span class="p">{</span></div>
<div class="a ln" style="left:17px;top:766px;color:#7e8087">18</div>
<div class="t code" style="left:151px;top:766px">        <span class="v">res</span> <span class="p">=</span> <span class="bi">append</span><span class="p">(</span><span class="v">res</span><span class="p">,</span> <span class="ty">Kv</span><span class="p">{</span><span class="v">k</span><span class="p">,</span> <span class="v">v</span><span class="p">})</span></div>
<div class="a ln" style="left:17px;top:810px;color:#7e8087">19</div>
<div class="t code" style="left:151px;top:810px">    <span class="p">}</span></div>
<div class="a ln" style="left:17px;top:854px;color:#7e8087">20</div>
<div class="t code" style="left:151px;top:854px">    <span class="ty">sort</span><span class="p">.</span><span class="fn">Slice</span><span class="p">(</span><span class="v">res</span><span class="p">,</span> <span class="k">func</span><span class="p">(</span><span class="v">i</span><span class="p">,</span> <span class="v">j</span> <span class="ty hl">int</span><span class="p">)</span> <span class="ty">bool</span> <span class="p">{</span></div>
<div class="a ln" style="left:17px;top:898px;color:#7e8087">21</div>
<div class="t code" style="left:151px;top:898px">        <span class="k">return</span> <span class="v">res</span><span class="p">[</span><span class="v">i</span><span class="p">].</span><span class="v">value</span> <span class="p">&gt;</span> <span class="v">res</span><span class="p">[</span><span class="v">j</span><span class="p">].</span><span class="v">value</span></div>
<div class="a ln" style="left:17px;top:942px;color:#7e8087">22</div>
<div class="t code" style="left:151px;top:942px">    <span class="p">})</span></div>
<div class="a ln" style="left:17px;top:986px;color:#7e8087">23</div>
<div class="t code" style="left:151px;top:986px">    <span class="k">return</span></div>
<div class="a ln" style="left:17px;top:1030px;color:#7e8087">24</div>
<div class="t code" style="left:151px;top:1030px"><span class="p">}</span></div>
<div class="a ln" style="left:17px;top:1074px;color:#7e8087">25</div>
<div class="a ln" style="left:17px;top:1118px;color:#7e8087">26</div>
<div class="t code" style="left:151px;top:1118px"><span class="k">func</span> <span class="fn">solution</span><span class="p">(</span><span class="v">nums</span> <span class="p">[]</span><span class="ty hl">int</span><span class="p">,</span> <span class="v">k</span> <span class="ty hl">int</span><span class="p">)</span> <span class="ty">string</span> <span class="p">{</span></div>
<div class="a ln" style="left:17px;top:1162px;color:#7e8087">27</div>
<div class="t code" style="left:151px;top:1162px">    <span class="cm">// Please write your code here</span></div>
<div class="a ln" style="left:17px;top:1206px;color:#7e8087">28</div>
<div class="t code" style="left:151px;top:1206px">    <span class="v">hash</span> <span class="p">:=</span> <span class="bi">make</span><span class="p">(</span><span class="k">map</span><span class="p">[</span><span class="ty hl">int</span><span class="p">]</span><span class="ty hl">int</span><span class="p">,</span> <span class="bi">len</span><span class="p">(</span><span class="v">nums</span><span class="p">))</span></div>
<div class="a ln" style="left:17px;top:1250px;color:#7e8087">29</div>
<div class="t code" style="left:151px;top:1250px">    <span class="k">for</span> <span class="v">_</span><span class="p">,</span> <span class="v">v</span> <span class="p">:=</span> <span class="k">range</span> <span class="v">nums</span> <span class="p">{</span></div>
</div>
<!-- right strip -->
<div class="a" style="left:3524px;top:356px;width:64px;height:112px;border-radius:32px;border:3px solid #38393f;background:#26272d"></div>
<svg style="left:3542px;top:380px" width="28" height="28" viewBox="0 0 28 28"><g stroke-width="2.6" stroke-linecap="round"><path d="M14 2V7" stroke="#e9b860"/><path d="M5 5L8.5 8.5" stroke="#6aa0f0"/><path d="M2 14H7" stroke="#6aa0f0"/><path d="M5 23L8.5 19.5" stroke="#6aa0f0"/><path d="M23 5L19.5 8.5" stroke="#e9875f"/><path d="M21 14H26" stroke="#c77ae0"/><path d="M12 12L22 24" stroke="#e97a9a" stroke-width="3.2"/></g></svg>
<div class="t" style="left:3536px;top:419px;font-size:25px;line-height:32px;color:#e6e6ea;font-weight:bold;width:40px;text-align:center">AI</div>
<svg style="left:3542px;top:497px" width="28" height="30" viewBox="0 0 28 30"><g fill="none" stroke="#a3a5ac" stroke-width="2.4" stroke-linecap="round"><path d="M9 7A5 5 0 0 1 19 7"/><path d="M7 9H21V20A7 7 0 0 1 7 20Z"/><path d="M14 11V26M7 14H2M21 14H26M7 21H2M21 21H26M7 9L3 6M21 9L25 6"/></g></svg>
<div class="a" style="left:3524px;top:2154px;width:63px;height:64px;border-radius:14px;background:#3a3b43"></div>
<svg style="left:3542px;top:2172px" width="28" height="28" viewBox="0 0 28 28"><rect x="1.5" y="1.5" width="25" height="25" fill="none" stroke="#e8e8ec" stroke-width="3"/><rect x="1.5" y="17" width="25" height="9.5" fill="#e8e8ec"/></svg>

<!-- output panel -->
<div class="a panel" style="left:532px;top:1750px;width:2980px;height:468px"></div>
<div class="a btn" style="left:548px;top:1768px;width:100px;height:52px;border-radius:8px;background:#2f313a"></div>
<div class="t" style="left:573px;top:1777px;font-size:26px;line-height:36px;color:#fff;font-weight:bold">输出</div>
<div class="t code" style="left:573px;top:1839px;color:#80aaf0">true
true</div>
<svg style="left:3456px;top:1786px" width="16" height="16" viewBox="0 0 16 16"><path d="M2 2L14 14M14 2L2 14" stroke="#e3e3e6" stroke-width="3.6" stroke-linecap="square"/></svg>
<div class="t" style="left:3262px;top:2193px;font-size:24.5px;line-height:36px;color:#fff">掘金技术社区 @ 六角小研</div>
<div class="a" style="left:3486px;top:637px;width:22px;height:37px;background:#45464c"></div>
<div class="a" style="left:3486px;top:727px;width:22px;height:17px;background:#45464c"></div>
<div class="a" style="left:3486px;top:798px;width:22px;height:17px;background:#45464c"></div>
<div class="a" style="left:3486px;top:904px;width:22px;height:18px;background:#45464c"></div>
<div class="a" style="left:3486px;top:939px;width:22px;height:18px;background:#45464c"></div>
<div class="a" style="left:3486px;top:1186px;width:22px;height:36px;background:#45464c"></div>
<div id="status" class="a"></div>
<svg style="left:64px;top:2242px" width="24" height="24" viewBox="0 0 24 24"><circle cx="12" cy="12" r="12" fill="#a5a7ae"/><path d="M8 8L16 16M16 8L8 16" stroke="#3b3e49" stroke-width="2.4"/></svg>
<div class="t st" style="left:97px">0</div>
<svg style="left:121px;top:2242px" width="24" height="24" viewBox="0 0 24 24"><circle cx="12" cy="12" r="12" fill="#a5a7ae"/><path d="M12 5.5V13.5" stroke="#3b3e49" stroke-width="3"/><rect x="10.5" y="16" width="3" height="3" fill="#3b3e49"/></svg>
<div class="t st" style="left:154px">0</div>
<div class="t st" style="left:2888px">行 11，列 12</div>
<div class="t st" style="left:3066px">空格: 4</div>
<div class="t st" style="left:3175px">UTF-8</div>
<div class="t st" style="left:3280px">LF</div>
<div class="t st" style="left:3338px">{ }</div>
<div class="t st" style="left:3376px">Go</div>
<div class="t st" style="left:3436px">1.22.1</div>
<svg style="left:3512px;top:2242px" width="16" height="24" viewBox="0 0 16 24"><path d="M10 1L3 13H9L6 23L14 10H8Z" fill="none" stroke="#a9acb6" stroke-width="1.8" stroke-linejoin="round"/></svg>

</body>
</html>
